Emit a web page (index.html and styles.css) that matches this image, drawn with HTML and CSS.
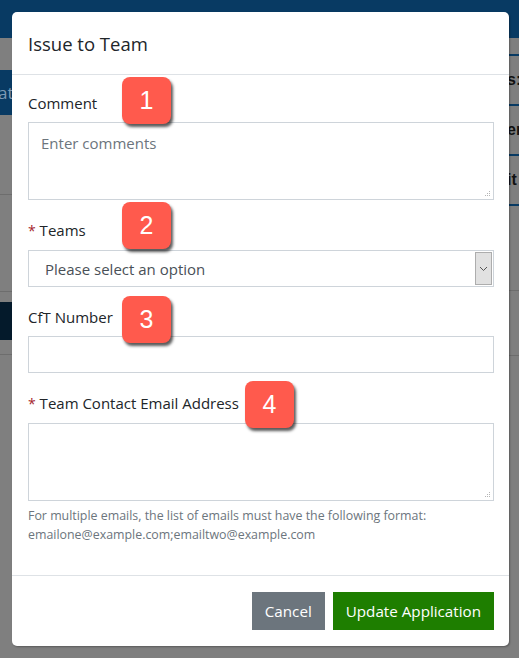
FILE: index.html
```html
<!DOCTYPE html>
<html>
<head>
  <title>Issue to Team</title>
  <link rel="stylesheet" href="styles.css">
</head>
<body>
  <div class="page">
    <div class="topbar"></div>
    <div class="content">
      <div class="side side-left">
        <div class="tab">at</div>
        <div class="rule rule-a"></div>
        <div class="rule rule-b"></div>
        <div class="dark-band"></div>
        <div class="rule rule-c"></div>
      </div>
      <div class="side side-right">
        <div class="cell">s:</div>
        <div class="cell">er</div>
        <div class="cell">it</div>
        <div class="rule rule-d"></div>
        <div class="rule rule-e"></div>
      </div>
    </div>
  </div>

  <div class="modal">
    <div class="modal-header">
      <h2>Issue to Team</h2>
    </div>

    <div class="modal-body">
      <div class="form-group">
        <label>Comment</label>
        <div class="area-wrap">
          <textarea class="field area" placeholder="Enter comments"></textarea>
          <svg class="grip" width="7" height="7" viewBox="0 0 7 7"><g fill="#b5b5b5"><rect x="5" y="1" width="1" height="1"/><rect x="3" y="3" width="1" height="1"/><rect x="5" y="3" width="1" height="1"/><rect x="1" y="5" width="1" height="1"/><rect x="3" y="5" width="1" height="1"/><rect x="5" y="5" width="1" height="1"/></g></svg>
        </div>
      </div>

      <div class="form-group">
        <label><span class="req">*</span> Teams</label>
        <div class="select-wrap">
          <select class="select">
            <option>Please select an option</option>
          </select>
          <div class="select-btn">
            <svg width="9" height="6" viewBox="0 0 9 6"><path d="M1 1l3.5 3.5L8 1" fill="none" stroke="#555" stroke-width="1"/></svg>
          </div>
        </div>
      </div>

      <div class="form-group">
        <label>CfT Number</label>
        <input class="field" type="text" />
      </div>

      <div class="form-group last">
        <label><span class="req">*</span> Team Contact Email Address</label>
        <div class="area-wrap">
          <textarea class="field area"></textarea>
          <svg class="grip" width="7" height="7" viewBox="0 0 7 7"><g fill="#b5b5b5"><rect x="5" y="1" width="1" height="1"/><rect x="3" y="3" width="1" height="1"/><rect x="5" y="3" width="1" height="1"/><rect x="1" y="5" width="1" height="1"/><rect x="3" y="5" width="1" height="1"/><rect x="5" y="5" width="1" height="1"/></g></svg>
        </div>
        <p class="help">For multiple emails, the list of emails must have the following format: emailone@example.com;emailtwo@example.com</p>
      </div>
    </div>

    <div class="modal-footer">
      <button class="btn btn-grey">Cancel</button>
      <button class="btn btn-green">Update Application</button>
    </div>

    <!-- callout numbers -->
    <div class="badge b1">1</div>
    <div class="badge b2">2</div>
    <div class="badge b3">3</div>
    <div class="badge b4">4</div>
  </div>
</body>
</html>
```

FILE: styles.css
```css
body {
  margin: 0;
  padding: 0;
  background: #7f7f7f;
  font-family: "Open Sans", Arial, sans-serif;
  color: #212529;
}

.page {
  height: 658px;
  overflow: hidden;
}

.topbar {
  height: 38px;
  background: #083a63;
}

.content {
  display: flex;
  justify-content: space-between;
}

.side {
  width: 40px;
  display: flex;
  flex-direction: column;
}

.tab {
  margin-top: 32px;
  height: 45px;
  background: #083a63;
  color: #7f9bb5;
  font-size: 17px;
  line-height: 45px;
  text-indent: -2px;
}

.rule {
  height: 1px;
  background: #6d6d6d;
}

.rule-a { margin-top: 79px; }
.rule-b { margin-top: 96px; }

.dark-band {
  margin-top: 10px;
  height: 38px;
  background: #041a2b;
}

.rule-c { margin-top: 14px; }

.cell {
  height: 48px;
  border-top: 2px solid #083a63;
  font-family: "Liberation Sans", Arial, sans-serif;
  font-weight: bold;
  font-size: 16px;
  line-height: 48px;
  color: #111;
  text-indent: 28px;
}

.cell:first-child { margin-top: 16px; }
.cell:nth-child(3) { border-bottom: 2px solid #083a63; }

.rule-d { margin-top: 84px; }
.rule-e { margin-top: 64px; }

.modal {
  position: absolute;
  top: 12px;
  left: 12px;
  width: 497px;
  background: white;
  border-radius: 5px;
  box-shadow: 1px 1px 2px rgba(0,0,0,0.3);
}

.modal-header {
  height: 62px;
  padding: 0 16px;
  border-bottom: 1px solid #dee2e6;
  display: flex;
  align-items: center;
}

.modal-header h2 {
  margin: 0;
  font-size: 18.5px;
  font-weight: normal;
  color: #212529;
}

.modal-body {
  padding: 17px 15px 31px 16px;
}

.form-group {
  margin-bottom: 19px;
}

.form-group.last {
  margin-bottom: 0;
}

label {
  display: block;
  font-size: 15px;
  line-height: 22px;
  margin-bottom: 8px;
}

.req {
  color: #a4262c;
  font-size: 14px;
}

.field {
  display: block;
  box-sizing: border-box;
  width: 100%;
  height: 37px;
  margin: 0;
  padding: 6px 12px;
  border: 1px solid #ced4da;
  font-family: inherit;
  font-size: 15px;
  color: #495057;
  background: white;
  outline: none;
}

.area-wrap {
  position: relative;
}

.field.area {
  height: 78px;
  padding: 10px 12px;
  resize: none;
}

.grip {
  position: absolute;
  right: 3px;
  bottom: 3px;
}

.field::placeholder {
  color: #6c757d;
}

.select-wrap {
  display: flex;
  height: 37px;
  box-sizing: border-box;
  border: 1px solid #ced4da;
  padding: 1px;
}

.select {
  flex: 1;
  border: none;
  appearance: none;
  background: white;
  font-family: inherit;
  font-size: 15px;
  color: #495057;
  padding: 0 15px;
  outline: none;
}

.select-btn {
  width: 15px;
  background: #e1e1e1;
  border: 1px solid #adadad;
  display: flex;
  align-items: center;
  justify-content: center;
}

.help {
  margin: 5px 0 0;
  font-size: 12.4px;
  line-height: 19px;
  color: #6c757d;
}

.modal-footer {
  border-top: 1px solid #dee2e6;
  padding: 16px 15px 16px;
  display: flex;
  justify-content: flex-end;
  gap: 8px;
}

.btn {
  height: 38px;
  padding: 0 13px;
  border: none;
  font-family: inherit;
  font-size: 15.2px;
  color: white;
}

.btn-grey {
  background: #6c757d;
}

.btn-green {
  background: #1e7e00;
}

.badge {
  position: absolute;
  width: 49px;
  height: 47px;
  border-radius: 8px;
  background: #ff5a4d;
  box-shadow: 2px 3px 3px rgba(0,0,0,0.65);
  color: white;
  font-family: "Liberation Sans", Arial, sans-serif;
  font-size: 25px;
  line-height: 47px;
  text-align: center;
}

.b1 { left: 110px; top: 65px; }
.b2 { left: 110px; top: 190px; }
.b3 { left: 110px; top: 284px; }
.b4 { left: 233px; top: 369px; }
```
